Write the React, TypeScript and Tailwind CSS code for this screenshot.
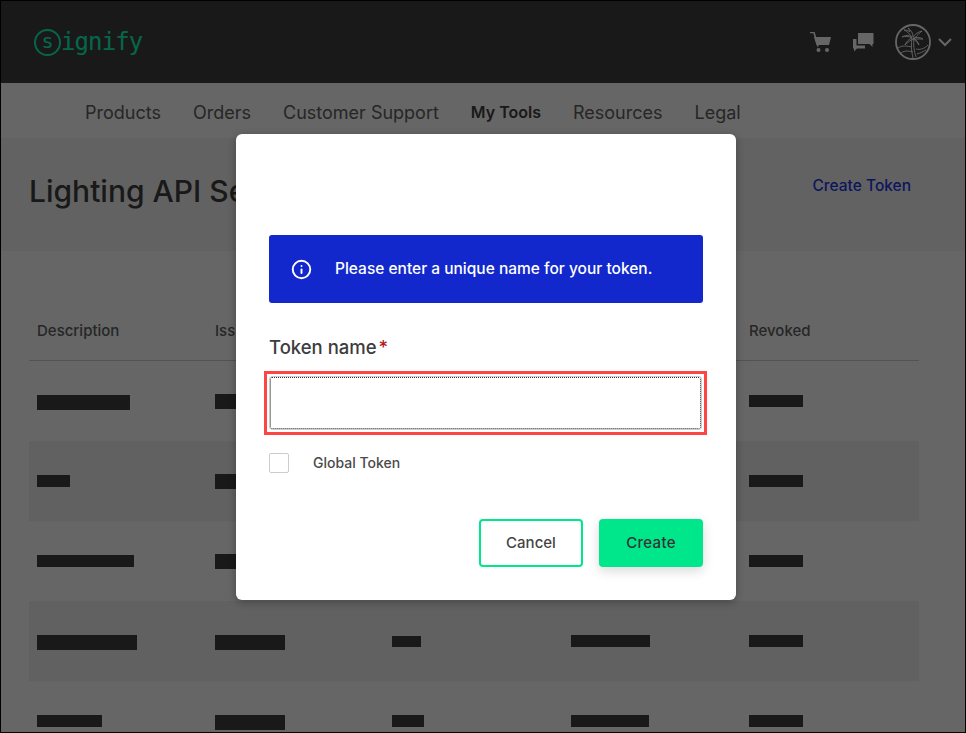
import { Info } from "lucide-react";

const navItems = ["Products", "Orders", "Customer Support", "My Tools", "Resources", "Legal"];

// redacted cells, widths and heights read off the screenshot
const rows = [
  { shaded: false, bars: ["w-[93px] h-[15px]", "w-[70px] h-[15px] -mt-px", "w-[29px] h-[12px]", "w-[79px] h-[12px]", "w-[54px] h-[12px]"] },
  { shaded: true, bars: ["w-[33px] h-[12px]", "w-[70px] h-[15px] -mt-px", "w-[29px] h-[12px]", "w-[79px] h-[12px]", "w-[54px] h-[12px]"] },
  { shaded: false, bars: ["w-[97px] h-[12px]", "w-[70px] h-[15px] -mt-px", "w-[29px] h-[12px]", "w-[79px] h-[12px]", "w-[54px] h-[12px]"] },
  { shaded: true, bars: ["w-[100px] h-[15px]", "w-[70px] h-[15px]", "w-[29px] h-[11px] mt-px", "w-[79px] h-[12px]", "w-[54px] h-[12px]"] },
  { shaded: false, bars: ["w-[65px] h-[12px]", "w-[70px] h-[15px]", "w-[32px] h-[12px]", "w-[78px] h-[12px]", "w-[54px] h-[12px]"] },
];

const headers = ["Description", "Issued", "Expires", "Last used", "Revoked"];

function CartIcon() {
  return (
    <svg width="21" height="20" viewBox="0 0 21 20" fill="#fff">
      <path d="M0 0.5h4l4 14" fill="none" stroke="#fff" strokeWidth="1.6" />
      <path d="M4 5h17l-2 8H6.5z" />
      <circle cx="8.5" cy="18" r="2" />
      <circle cx="17" cy="18" r="2" />
    </svg>
  );
}

function ChatIcon() {
  return (
    <svg width="21" height="19" viewBox="0 0 21 19" fill="#fff">
      <path d="M5 0h15.500v11H19.500v3l-3-3H5z" />
      <path d="M0 6h3.500v6.500H12V15.500H4l-3 3v-3H0z" />
    </svg>
  );
}

function PalmAvatar() {
  return (
    <svg width="36" height="36" viewBox="0 0 36 36" fill="none" stroke="#fff" strokeWidth="0.9">
      <circle cx="18" cy="18" r="17" strokeWidth="1.8" />
      <path d="M17 14C15 10 12 7 9 6c3 0 5 1 6 2-1-2-1-3-2-4 3 2 5 5 5 9" />
      <path d="M17 14c-3-2-7-2-10-1 3-2 7-2 10 0" />
      <path d="M17 14c-3 1-6 4-7 7 3-3 6-5 8-6" />
      <path d="M18 13c2-3 5-5 9-6-2 2-5 4-7 7" />
      <path d="M18 14c3-1 7-1 10 1-3 0-7 0-10 0" />
      <path d="M18 14c3 1 5 4 6 7-2-3-4-5-6-6" />
      <path d="M17 14c-1 6-1 12 1 20M19 14c-1 6 0 13 2 19" />
      <path d="M3 24c4-3 9-2 14-1M21 25c4 1 8 0 12-4M6 29c4-3 8-2 12-1M22 30c3-1 6-2 9-4" />
    </svg>
  );
}

function Logo() {
  return (
    <div className="flex items-center text-[#11ffb9] font-['DejaVu_Sans_Mono',monospace]">
      <div className="flex items-center justify-center w-[27px] h-[27px] rounded-full border-[2px] border-[#11ffb9] text-[20px] leading-none pb-[3px]">
        s
      </div>
      <span className="text-[24px] leading-none tracking-[-0.9px]">ignify</span>
    </div>
  );
}

export default function App() {
  return (
    <div className="relative w-[966px] h-[733px] overflow-hidden bg-white border border-black font-['Inter',sans-serif] text-[#606060]">
      {/* Header */}
      <header className="flex items-center justify-between h-[82px] bg-[#3f3f3f] pl-[33px] pr-[13px]">
        <Logo />
        <div className="flex items-center">
          <CartIcon />
          <div className="ml-[22px] mr-[21px]">
            <ChatIcon />
          </div>
          <PalmAvatar />
          <svg width="14" height="9" viewBox="0 0 14 9" fill="none" stroke="#fff" strokeWidth="2" className="ml-[7px]">
            <path d="M1 1l6 6 6-6" />
          </svg>
        </div>
      </header>

      {/* Nav */}
      <nav className="flex items-center gap-[32px] h-[55px] pl-[84px] pt-[3px] text-[18px]">
        {navItems.map((item) => (
          <span key={item} className={item === "My Tools" ? "text-[16px] font-semibold text-[#3f3f3f]" : ""}>
            {item}
          </span>
        ))}
      </nav>

      {/* Page title */}
      <section className="flex items-start justify-between h-[113px] bg-[#f6f6f6] pl-[28px] pr-[54px] pt-[34px]">
        <h1 className="text-[30px] leading-[38px] font-medium text-[#3f3f3f] whitespace-nowrap">Lighting API Settings</h1>
        <a className="mt-[2px] text-[15.500px] font-medium text-[#2238e8]">Create Token</a>
      </section>

      {/* Table */}
      <div className="ml-[28px] w-[890px] pt-[69px] text-[15px]">
        <div className="grid grid-cols-[178px_177px_179px_178px_178px] h-[41px] pl-[8px] border-b border-[#d0d0d0] font-medium">
          {headers.map((h) => (
            <span key={h}>{h}</span>
          ))}
        </div>
        {rows.map((row, i) => (
          <div
            key={i}
            className={`grid grid-cols-[178px_177px_179px_178px_178px] items-start h-[80px] pl-[8px] pt-[34px] ${row.shaded ? "bg-[#f2f2f2]" : ""}`}
          >
            {row.bars.map((bar, j) => (
              <div key={j} className={`${bar} bg-[#3f3f3f]`} />
            ))}
          </div>
        ))}
      </div>

      {/* Overlay + modal */}
      <div className="absolute inset-0 bg-black/60">
        <div className="absolute left-[235px] top-[133px] w-[500px] h-[466px] rounded-[6px] bg-white px-[33px] pt-[101px] shadow-[0_2px_8px_rgba(0,0,0,0.3)]">
          <div className="flex items-center h-[68px] rounded-[3px] bg-[#1228cc] pl-[22px] text-white">
            <Info size={21} strokeWidth={2.2} />
            <span className="ml-[23px] text-[15.500px] font-medium">Please enter a unique name for your token.</span>
          </div>
          <div className="mt-[31px] text-[18.500px] leading-[26px] font-medium text-[#3c3c3c]">
            Token name<span className="ml-[2px] text-[#b01c1c]">*</span>
          </div>
          <div className="mt-[11px] -ml-[5px] -mr-[4px] h-[64px] border-[3px] border-[#ff4444] p-[3px]">
            <input
              type="text"
              className="block w-full h-full rounded-[2px] border border-dotted border-[#333] bg-white outline outline-1 outline-[#ccc]"
            />
          </div>
          <label className="flex items-center mt-[17px]">
            <span className="w-[20px] h-[20px] rounded-[2px] border border-[#ccc] bg-white" />
            <span className="ml-[24px] text-[14px] font-medium text-[#4a4a4a]">Global Token</span>
          </label>
          <div className="flex justify-end gap-[16px] mt-[46px]">
            <button className="w-[104px] h-[48px] rounded-[4px] border-2 border-[#00e68a] bg-white text-[15px] font-medium text-[#444]">
              Cancel
            </button>
            <button className="w-[104px] h-[48px] rounded-[4px] bg-[#00e68a] text-[15px] tracking-[0.3px] font-medium text-[#333] shadow-[0_4px_12px_rgba(0,0,0,0.15)]">
              Create
            </button>
          </div>
        </div>
      </div>
    </div>
  );
}
